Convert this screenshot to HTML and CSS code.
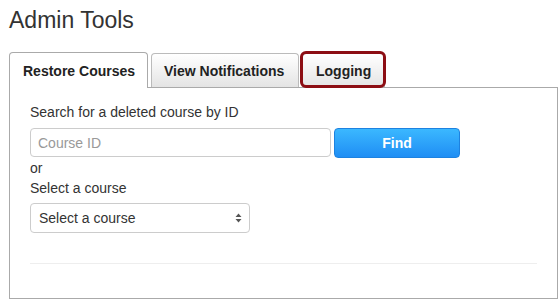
FILE: index.html
```html
<!DOCTYPE html>
<html lang="en">
<head>
  <meta charset="UTF-8" />
  <title>Admin Tools</title>
  <link rel="stylesheet" href="styles.css">
</head>
<body>

<div class="page">
  <h1>Admin Tools</h1>

  <div class="tabs">
    <a class="tab active">Restore Courses</a>
    <a class="tab">View Notifications</a>
    <a class="tab marked">Logging</a>
  </div>

  <div class="panel">
    <label class="line">Search for a deleted course by ID</label>
    <div class="search-row">
      <input type="text" placeholder="Course ID" />
      <button class="btn-find">Find</button>
    </div>
    <div class="line">or</div>
    <label class="line">Select a course</label>
    <div class="select">
      <span>Select a course</span>
      <svg width="7" height="10" viewBox="0 0 7 10">
        <path d="M3.5 0.5 L6.5 4 L0.5 4 Z M0.5 6 L6.5 6 L3.5 9.5 Z" fill="#555"/>
      </svg>
    </div>
    <hr />
  </div>
</div>

</body>
</html>
```

FILE: styles.css
```css
* { box-sizing: border-box; }
body { margin: 0; font-family: "Liberation Sans", Arial, sans-serif; color: #333; background: #fff; }

.page { padding: 8px 0 0 9px; width: 558px; }

h1 {
  margin: 0 0 19px;
  font-size: 23px;
  font-weight: normal;
  line-height: 25px;
  color: #333;
}

.tabs {
  display: flex;
  align-items: flex-end;
  gap: 3px;
  position: relative;
  z-index: 1;
}

.tab {
  display: flex;
  align-items: center;
  height: 34px;
  padding: 0 13px;
  font-size: 14px;
  font-weight: bold;
  color: #222;
  border: 1px solid #bbb;
  border-bottom: none;
  border-radius: 4px 4px 0 0;
  background: linear-gradient(#ffffff, #e4e4e4);
  white-space: nowrap;
}

.tab.active {
  height: 36px;
  margin-bottom: -1px;
  border-color: #aaa;
  background: #fff;
  width: 139px;
}

.tabs .tab:nth-child(2) { padding: 0 12px; width: 148px; }

.tab.marked { position: relative; margin-left: 0; }

/* red highlight round the Logging tab */
.tab.marked::after {
  content: "";
  position: absolute;
  top: -3px;
  left: -3px;
  right: -2px;
  bottom: -1px;
  border: 3px solid #8c0d13;
  border-radius: 6px;
}

.panel {
  border: 1px solid #aaa;
  height: 212px;
  padding: 14px 20px 0;
}

.line {
  display: block;
  font-size: 14px;
  line-height: 20px;
}

.search-row {
  display: flex;
  gap: 3px;
  margin-top: 6px;
}

.search-row input {
  width: 301px;
  height: 29px;
  border: 1px solid #ccc;
  border-radius: 4px;
  padding: 0 7px;
  font-family: inherit;
  font-size: 14px;
  color: #333;
}

.search-row input::placeholder { color: #999; }

.btn-find {
  width: 126px;
  height: 30px;
  border: 1px solid #1d82e0;
  border-radius: 4px;
  background: linear-gradient(#3bb8ff, #1f8ef4);
  color: #fff;
  font-family: inherit;
  font-size: 14px;
  font-weight: bold;
}

.select {
  display: flex;
  align-items: center;
  justify-content: space-between;
  width: 220px;
  height: 30px;
  margin-top: 5px;
  padding: 0 7px 0 8px;
  border: 1px solid #ccc;
  border-radius: 4px;
  font-size: 14px;
  color: #333;
}

hr {
  border: none;
  border-top: 1px solid #eee;
  margin: 30px 0 0;
}
```
